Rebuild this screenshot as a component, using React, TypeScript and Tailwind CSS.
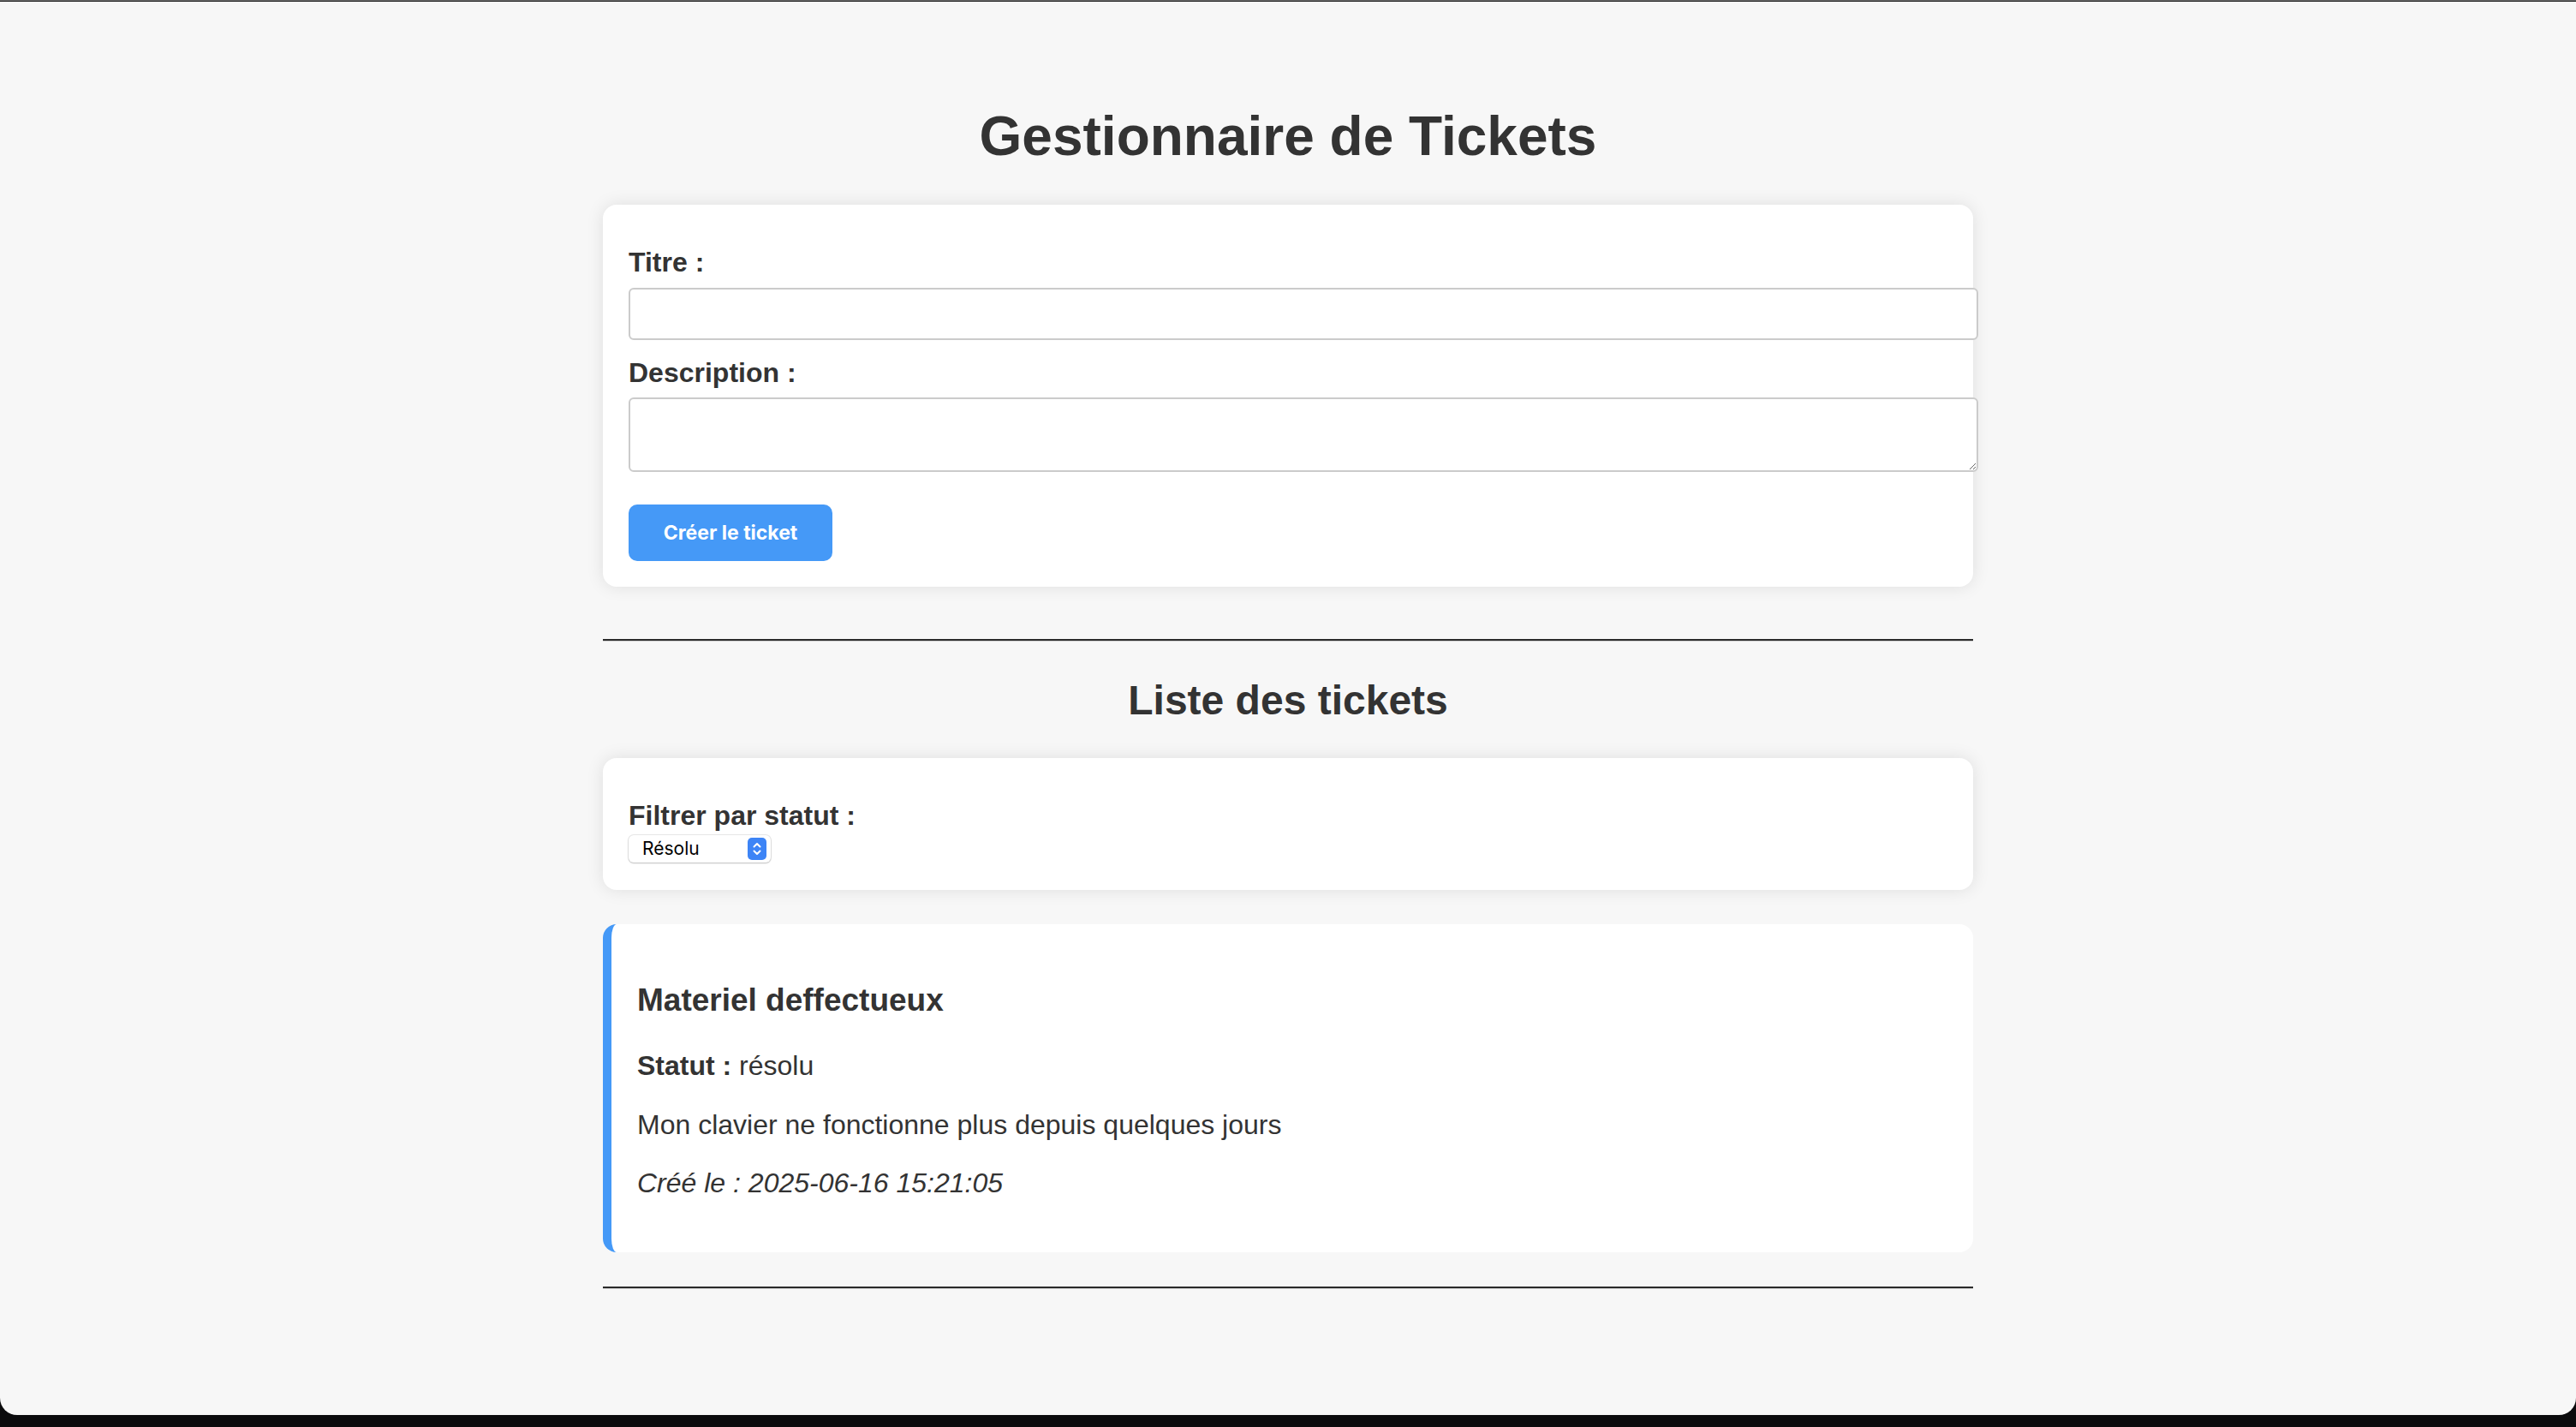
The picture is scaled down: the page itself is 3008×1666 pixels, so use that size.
import React, { FC } from 'react';

interface Ticket {
  title: string;
  status: string;
  description: string;
  createdAt: string;
}

const tickets: Array<Ticket> = [
  {
    title: 'Materiel deffectueux',
    status: 'résolu',
    description: 'Mon clavier ne fonctionne plus depuis quelques jours',
    createdAt: '2025-06-16 15:21:05',
  },
];

const font = "font-['Liberation_Sans',Arial,sans-serif]";

const Rule: FC = () => (
  <div className="flex flex-col">
    <div className="h-[2px] bg-[#2b2b2b]" />
    <div className="h-[1px] bg-[#d2d2d2]" />
  </div>
);

const StatusSelect: FC = () => (
  <div className="relative mt-[4px] h-[32px] w-[166px]">
    <select
      defaultValue="resolu"
      className="h-full w-full appearance-none rounded-[6px] bg-white pl-[16px] text-[21px] text-black shadow-[0_0_0_1px_rgba(0,0,0,0.09),0_1px_2px_rgba(0,0,0,0.18)] outline-none font-['Inter',sans-serif]"
    >
      <option value="tous">Tous</option>
      <option value="ouvert">Ouvert</option>
      <option value="en_cours">En cours</option>
      <option value="resolu">Résolu</option>
    </select>
    <span className="pointer-events-none absolute right-[5px] top-[3px] flex h-[26px] w-[22px] items-center justify-center rounded-[5px] bg-[#3d84f6]">
      <svg width="12" height="18" viewBox="0 0 12 18" fill="none">
        <path d="M2.5 6.5 6 3l3.5 3.5M2.5 11.5 6 15l3.5-3.5" stroke="white" strokeWidth="2" strokeLinecap="round" strokeLinejoin="round" />
      </svg>
    </span>
  </div>
);

const TicketCard: FC<{ ticket: Ticket }> = ({ ticket }) => (
  <div className="mt-[40px] rounded-[16px] border-l-[10px] border-[#4599f7] bg-white px-[30px] pt-[30px] pb-[30px] text-[#333]">
    <h3 className="mt-[37px] text-[37px] font-bold leading-[43px]">{ticket.title}</h3>
    <p className="mt-[37px] text-[32px] leading-[37px]">
      <strong>Statut :</strong> {ticket.status}
    </p>
    <p className="mt-[32px] text-[32px] leading-[37px]">{ticket.description}</p>
    <p className="mt-[31px] mb-[32px] text-[32px] italic leading-[37px]">
      Créé le : {ticket.createdAt}
    </p>
  </div>
);

const App: FC = () => {
  return (
    <div className={`h-[1666px] w-full bg-[#0b0b0d] ${font}`}>
      <div className="h-[1652px] overflow-hidden rounded-b-[20px] bg-[#f7f7f7]">
        <div className="h-[1px] bg-[#6a6a6a]" />
        <div className="h-[1px] bg-[#262626]" />
        <main className="mx-auto w-[1600px] pt-[120px] text-[#333]">
          <h1 className="text-center text-[64px] font-bold leading-[74px]">Gestionnaire de Tickets</h1>

          <form className="mt-[43px] rounded-[16px] bg-white p-[30px] shadow-[0_0_20px_rgba(0,0,0,0.1)]">
            <label className="mt-[19px] block text-[32px] font-bold leading-[37px]">Titre :</label>
            <input
              type="text"
              className="mt-[11px] box-content block h-[57px] w-full rounded-[6px] border-2 border-[#cbcbcb] bg-white px-[16px] py-0 outline-none"
            />
            <label className="mt-[20px] block text-[32px] font-bold leading-[37px]">Description :</label>
            <textarea className="mt-[10px] box-content block h-[51px] w-full rounded-[6px] border-2 border-[#cbcbcb] bg-white px-[16px] py-[16px] outline-none" />
            <button
              type="button"
              className="mt-[38px] flex h-[66px] w-[238px] items-center justify-center rounded-[10px] bg-[#4599f7] text-[23px] font-bold text-white font-['Inter',sans-serif]"
            >
              Créer le ticket
            </button>
          </form>

          <div className="mt-[61px]">
            <Rule />
          </div>

          <h2 className="mt-[41px] text-center text-[48px] font-bold leading-[55px]">Liste des tickets</h2>

          <div className="mt-[40px] rounded-[16px] bg-white px-[30px] pt-[30px] pb-[32px] shadow-[0_0_20px_rgba(0,0,0,0.1)]">
            <label className="mt-[19px] block text-[32px] font-bold leading-[37px]">Filtrer par statut :</label>
            <StatusSelect />
          </div>

          {tickets.map((ticket, ticketIdx) => (
            <React.Fragment key={`${ticket.title}_${ticketIdx}`}>
              <TicketCard ticket={ticket} />
            </React.Fragment>
          ))}

          <div className="mt-[40px]">
            <Rule />
          </div>
        </main>
      </div>
    </div>
  );
};

export default App;
